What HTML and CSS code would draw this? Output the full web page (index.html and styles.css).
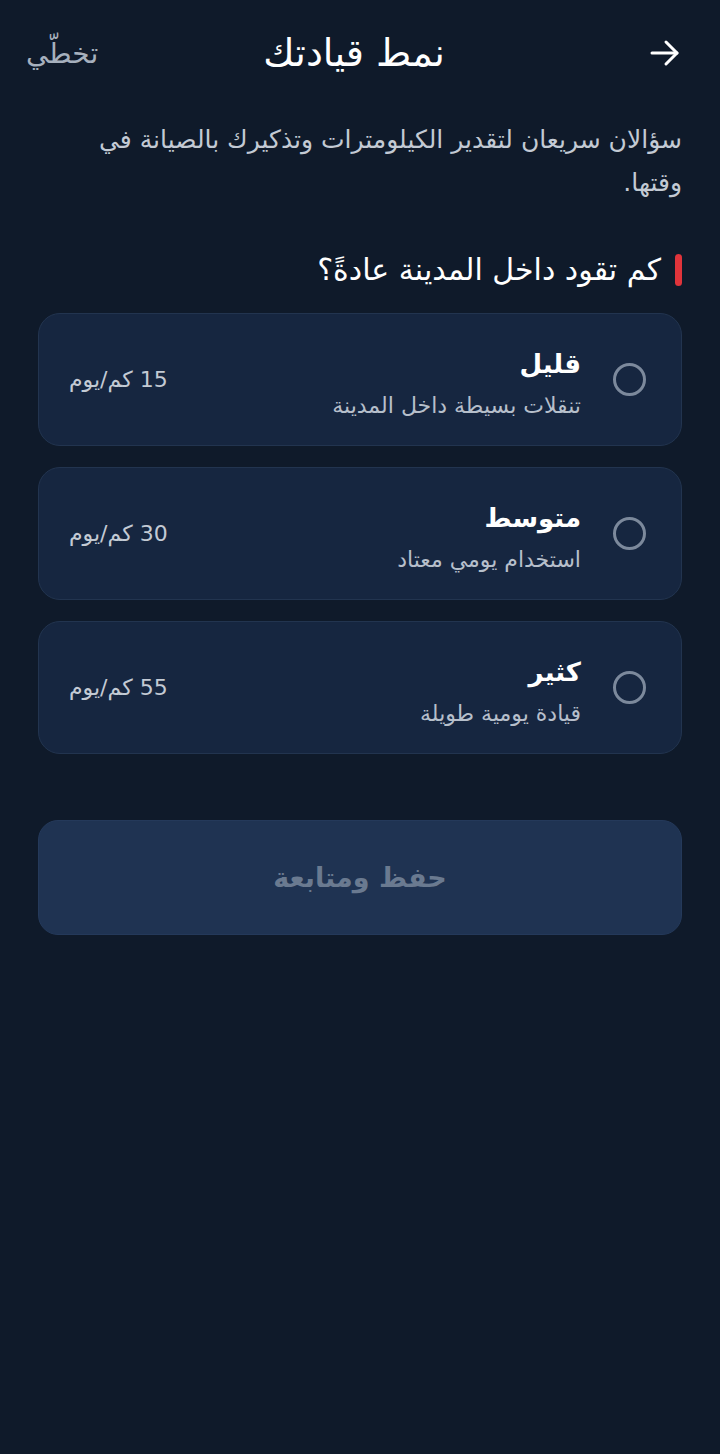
FILE: index.html
```html
<!DOCTYPE html>
<html lang="ar" dir="rtl">
<head>
    <meta charset="UTF-8">
    <meta name="viewport" content="width=device-width, initial-scale=1.0">
    <title>نمط قيادتك</title>
    <link rel="stylesheet" href="styles.css">
</head>
<body>
    <div class="screen">
        <!-- الشريط العلوي -->
        <header class="top-bar">
            <button class="back" aria-label="رجوع">
                <svg width="34" height="34" viewBox="0 0 34 34" fill="none" stroke="#ffffff" stroke-width="3" stroke-linecap="round" stroke-linejoin="round">
                    <path d="M4 17h25"/>
                    <path d="M18 6l11 11-11 11"/>
                </svg>
            </button>
            <h1>نمط قيادتك</h1>
            <a class="skip" href="#">تخطّي</a>
        </header>

        <p class="intro">سؤالان سريعان لتقدير الكيلومترات وتذكيرك بالصيانة في وقتها.</p>

        <h2 class="question">كم تقود داخل المدينة عادةً؟</h2>

        <!-- الخيارات -->
        <div class="options">
            <label class="option">
                <span class="radio"></span>
                <span class="option-text">
                    <span class="option-title">قليل</span>
                    <span class="option-sub">تنقلات بسيطة داخل المدينة</span>
                </span>
                <span class="option-value">15 كم/يوم</span>
            </label>

            <label class="option">
                <span class="radio"></span>
                <span class="option-text">
                    <span class="option-title">متوسط</span>
                    <span class="option-sub">استخدام يومي معتاد</span>
                </span>
                <span class="option-value">30 كم/يوم</span>
            </label>

            <label class="option">
                <span class="radio"></span>
                <span class="option-text">
                    <span class="option-title">كثير</span>
                    <span class="option-sub">قيادة يومية طويلة</span>
                </span>
                <span class="option-value">55 كم/يوم</span>
            </label>
        </div>

        <button class="save" disabled>حفظ ومتابعة</button>
    </div>
</body>
</html>
```

FILE: styles.css
```css
/* Estilos globais */
body {
    margin: 0;
    background: #0f1a2a;
    font-family: 'DejaVu Sans', 'Noto Sans', sans-serif;
    color: #ffffff;
    min-height: 100vh;
}

.screen {
    padding: 0 38px;
}

/* Barra superior */
.top-bar {
    display: flex;
    align-items: center;
    justify-content: space-between;
    height: 106px;
    margin-left: -12px;
}

.back {
    background: none;
    border: none;
    padding: 0;
    width: 90px;
    display: flex;
    justify-content: flex-start;
    cursor: pointer;
}

.top-bar h1 {
    margin: 0;
    font-size: 38px;
    font-weight: 400;
    color: #ffffff;
}

.skip {
    width: 90px;
    text-align: left;
    color: #a6b0bd;
    font-size: 28px;
    text-decoration: none;
}

/* Texto de introdução */
.intro {
    margin: 12px 0 0;
    font-size: 25px;
    line-height: 43px;
    color: #c3cad4;
    padding-left: 50px;
}

/* Pergunta */
.question {
    margin: 48px 0 26px;
    font-size: 30px;
    font-weight: 400;
    color: #ffffff;
    display: flex;
    align-items: center;
    gap: 14px;
}

.question::before {
    content: '';
    width: 7px;
    height: 32px;
    border-radius: 4px;
    background: #e0343b;
}

/* Opções */
.options {
    display: flex;
    flex-direction: column;
    gap: 21px;
}

.option {
    display: flex;
    align-items: center;
    height: 131px;
    padding: 0 35px 0 30px;
    background: #162640;
    border: 1px solid #22344f;
    border-radius: 22px;
    cursor: pointer;
}

.radio {
    box-sizing: border-box;
    width: 33px;
    height: 33px;
    border: 3px solid #7c899c;
    border-radius: 50%;
    flex-shrink: 0;
}

.option-text {
    display: flex;
    flex-direction: column;
    gap: 14px;
    padding-top: 8px;
    margin-right: 32px;
    flex: 1;
}

.option-title {
    font-size: 26px;
    font-weight: 700;
    color: #ffffff;
}

.option-sub {
    font-size: 22px;
    color: #b6bfcb;
}

.option-value {
    font-size: 22px;
    color: #c3cad4;
}

/* Botão */
.save {
    display: block;
    width: 100%;
    height: 115px;
    margin-top: 66px;
    background: #1f3352;
    border: 1px solid #24395a;
    border-radius: 20px;
    font-family: inherit;
    font-size: 27px;
    font-weight: 700;
    color: #6a7a90;
}
```
